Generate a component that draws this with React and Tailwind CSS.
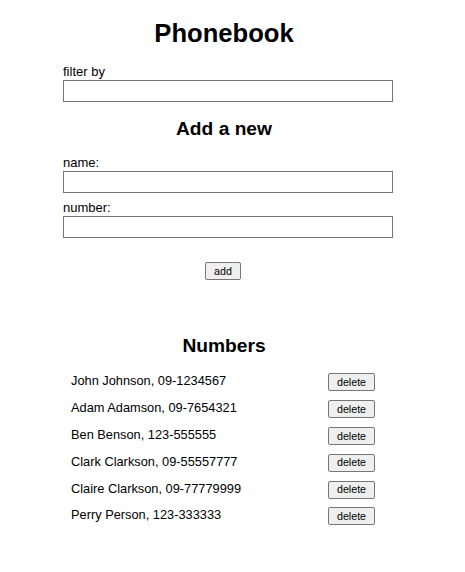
import React, { useState } from 'react';

const initialPersons = [
  { id: 1, name: 'John Johnson', number: '09-1234567' },
  { id: 2, name: 'Adam Adamson', number: '09-7654321' },
  { id: 3, name: 'Ben Benson', number: '123-555555' },
  { id: 4, name: 'Clark Clarkson', number: '09-55557777' },
  { id: 5, name: 'Claire Clarkson', number: '09-77779999' },
  { id: 6, name: 'Perry Person', number: '123-333333' },
];

const buttonClass =
  'h-[18px] border border-[#767676] bg-[#efefef] text-[10.7px] leading-none text-black rounded-[2px]';

const Field = ({ label, value, onChange, className = '' }) => (
  <div className={className}>
    <label className="block text-[13px] leading-[16px]">{label}</label>
    <input
      value={value}
      onChange={onChange}
      className="block w-full h-[22px] border border-[#767676] bg-white px-[2px] outline-none"
    />
  </div>
);

const App = () => {
  const [persons, setPersons] = useState(initialPersons);
  const [filter, setFilter] = useState('');
  const [newName, setNewName] = useState('');
  const [newNumber, setNewNumber] = useState('');

  const addPerson = (e) => {
    e.preventDefault();
    if (!newName) return;
    setPersons(persons.concat({ id: Date.now(), name: newName, number: newNumber }));
    setNewName('');
    setNewNumber('');
  };

  const shown = persons.filter((p) =>
    p.name.toLowerCase().includes(filter.toLowerCase())
  );

  return (
    <div className="w-[448px] pt-[18px] pb-[40px] font-['Liberation_Sans',Arial,sans-serif] text-black bg-white">
      <h1 className="text-center text-[25.6px] font-bold leading-[30px]">Phonebook</h1>

      <Field
        label="filter by"
        value={filter}
        onChange={(e) => setFilter(e.target.value)}
        className="ml-[63px] w-[330px] mt-[16px]"
      />

      <h2 className="mt-[15px] text-center text-[19.2px] font-bold leading-[24px]">Add a new</h2>

      <form onSubmit={addPerson} className="mt-[14px]">
        <div className="ml-[63px] w-[330px]">
          <Field label="name:" value={newName} onChange={(e) => setNewName(e.target.value)} />
          <Field
            label="number:"
            value={newNumber}
            onChange={(e) => setNewNumber(e.target.value)}
            className="mt-[7px]"
          />
        </div>
        <div className="mt-[24px] flex justify-center pr-[2px]">
          <button type="submit" className={`${buttonClass} w-[36px]`}>
            add
          </button>
        </div>
      </form>

      <h2 className="mt-[54px] text-center text-[19.2px] font-bold leading-[24px]">Numbers</h2>

      <div className="mt-[11px]">
        {shown.map((person) => (
          <div key={person.id} className="flex items-center h-[26.8px]">
            <span className="ml-[71px] w-[257px] pb-[2px] text-[12.8px] leading-[16px]">
              {person.name}, {person.number}
            </span>
            <button
              onClick={() => setPersons(persons.filter((p) => p.id !== person.id))}
              className={`${buttonClass} w-[47px]`}
            >
              delete
            </button>
          </div>
        ))}
      </div>
    </div>
  );
};

export default App;
